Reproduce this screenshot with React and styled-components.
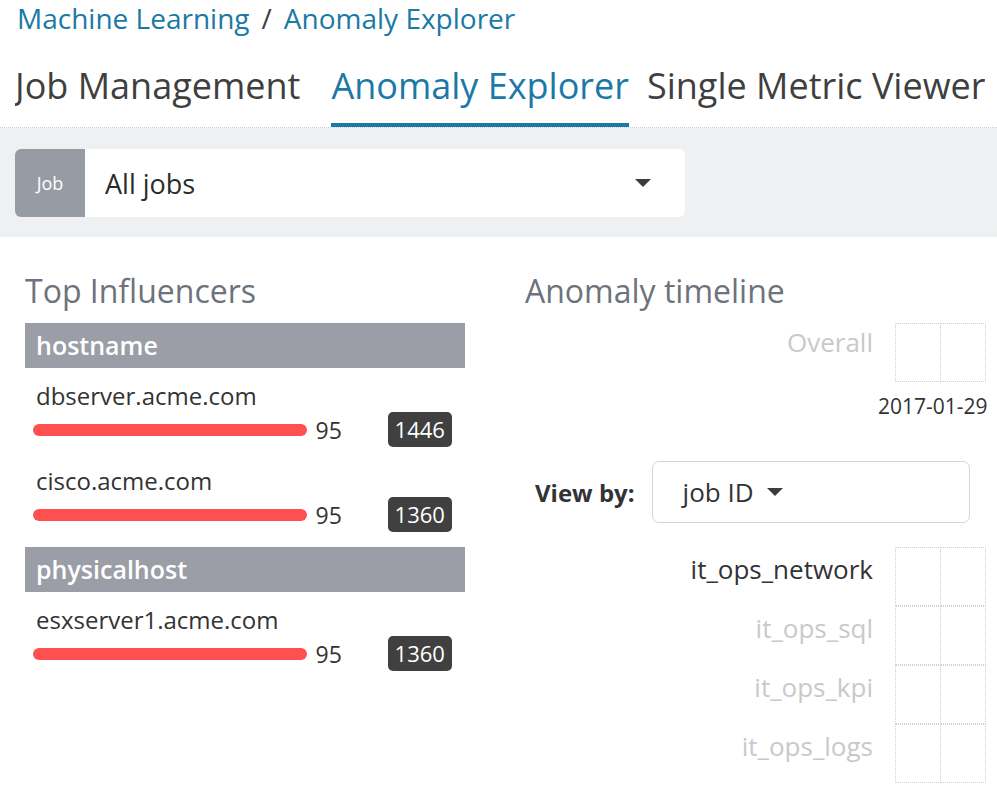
import React from "react";
import styled, { createGlobalStyle } from "styled-components";

const GlobalStyle = createGlobalStyle`
  html, body {
    margin: 0;
    padding: 0;
    background: #fff;
  }
  body {
    font-family: "Open Sans", "Noto Sans", sans-serif;
    color: #333;
  }
`;

const Page = styled.div`
  width: 997px;
  height: 790px;
  overflow: hidden;
  background: #fff;
`;

const Breadcrumbs = styled.div`
  height: 48px;
  padding: 2px 0 0 17px;
  box-sizing: border-box;
  font-size: 28px;
  line-height: 32px;
  color: #1a79a5;
  white-space: nowrap;
`;

const Sep = styled.span`
  color: #3f3f3f;
  margin: 0 12px;
`;

const Tabs = styled.div`
  display: flex;
  padding-left: 15px;
  border-bottom: 1px dotted #cfcfcf;
  white-space: nowrap;
`;

const TabClip = styled.div`
  display: flex;
  width: 970px;
  overflow: hidden;
`;

const Tab = styled.div`
  font-size: 36px;
  line-height: 44px;
  padding: 16px 0 15px;
  margin-right: ${({ gap }) => gap}px;
  color: ${({ active }) => (active ? "#1a79a5" : "#3f3f3f")};
  border-bottom: 4px solid ${({ active }) => (active ? "#1a79a5" : "transparent")};
  flex-shrink: 0;
`;

const FilterBand = styled.div`
  background: #eef0f2;
  padding: 21px 15px 20px;
`;

const Select = styled.div`
  display: flex;
  width: 670px;
  height: 68px;
  background: #fff;
  border-radius: 6px;
  overflow: hidden;
`;

const Prepend = styled.div`
  width: 70px;
  background: #979ba4;
  color: #fff;
  font-size: 18px;
  display: flex;
  align-items: center;
  justify-content: center;
`;

const SelectValue = styled.div`
  flex: 1;
  display: flex;
  align-items: center;
  justify-content: space-between;
  padding: 0 34px 0 20px;
  font-size: 27px;
  color: #2b2b2b;
`;

const Caret = styled.span`
  width: 0;
  height: 0;
  border-left: ${({ size }) => size}px solid transparent;
  border-right: ${({ size }) => size}px solid transparent;
  border-top: ${({ size }) => size}px solid #3c3c3c;
  display: inline-block;
`;

const Main = styled.div`
  display: flex;
  gap: 60px;
  padding: 34px 0 0 25px;
`;

const LeftCol = styled.div`
  width: 440px;
  flex-shrink: 0;
`;

const RightCol = styled.div`
  flex: 1;
  min-width: 0;
`;

const Heading = styled.div`
  font-size: 32px;
  line-height: 40px;
  color: #6d737c;
  margin-bottom: 12px;
  white-space: nowrap;
`;

const Group = styled.div`
  padding-bottom: 15px;
`;

const GroupHeader = styled.div`
  height: 45px;
  background: #9b9ea6;
  color: #fff;
  font-size: 25px;
  font-weight: 600;
  line-height: 45px;
  padding-left: 11px;
`;

const ItemList = styled.div`
  display: flex;
  flex-direction: column;
  gap: 6px;
`;

const Item = styled.div`
  padding-top: 15px;
`;

const ItemName = styled.div`
  font-size: 24px;
  line-height: 26px;
  padding-left: 11px;
  color: #333;
`;

const ScoreRow = styled.div`
  display: flex;
  align-items: center;
  height: 35px;
  margin-top: 3px;
  padding-left: 8px;
`;

const Bar = styled.div`
  width: 274px;
  height: 12px;
  border-radius: 6px;
  background: #fe5050;
`;

const Score = styled.div`
  width: 81px;
  padding-left: 9px;
  box-sizing: border-box;
  font-size: 23px;
  color: #333;
`;

const Badge = styled.div`
  height: 35px;
  padding: 0 7px;
  border-radius: 5px;
  background: #404040;
  color: #fff;
  font-size: 22px;
  line-height: 35px;
`;

const SwimRow = styled.div`
  display: grid;
  grid-template-columns: 348px auto;
  column-gap: 22px;
  align-items: start;
`;

const RowLabel = styled.div`
  font-size: 26px;
  line-height: ${({ compact }) => (compact ? 38 : 44)}px;
  text-align: right;
  white-space: nowrap;
  color: ${({ dim }) => (dim ? "#c9c9c9" : "#333")};
`;

const Cells = styled.div`
  display: flex;
`;

const Cell = styled.div`
  width: 44px;
  height: 57px;
  border: 1px dotted #cfcfcf;
  margin-left: -1px;
  &:first-child {
    margin-left: 0;
  }
`;

const DateLabel = styled.div`
  grid-column: 2;
  margin-left: -17px;
  margin-top: 10px;
  font-size: 21px;
  line-height: 28px;
  color: #333;
  white-space: nowrap;
`;

const ViewBy = styled.div`
  display: flex;
  align-items: center;
  gap: 17px;
  padding-left: 10px;
  margin: 41px 0 24px;
`;

const ViewByLabel = styled.div`
  font-size: 24px;
  font-weight: 700;
  color: #333;
`;

const ViewBySelect = styled.div`
  width: 318px;
  height: 62px;
  box-sizing: border-box;
  border: 1px solid #d4d4d4;
  border-radius: 7px;
  display: flex;
  align-items: center;
  gap: 13px;
  padding-left: 30px;
  font-size: 26px;
  color: #333;
`;

const SwimLanes = styled.div`
  display: flex;
  flex-direction: column;
`;

const influencers = [
  {
    field: "hostname",
    items: [
      { name: "dbserver.acme.com", score: 95, count: 1446 },
      { name: "cisco.acme.com", score: 95, count: 1360 },
    ],
  },
  {
    field: "physicalhost",
    items: [{ name: "esxserver1.acme.com", score: 95, count: 1360 }],
  },
];

const jobs = [
  { id: "it_ops_network", dim: false },
  { id: "it_ops_sql", dim: true },
  { id: "it_ops_kpi", dim: true },
  { id: "it_ops_logs", dim: true },
];

export default function App() {
  return (
    <Page>
      <GlobalStyle />
      <Breadcrumbs>
        Machine Learning<Sep>/</Sep>Anomaly Explorer
      </Breadcrumbs>
      <Tabs>
        <TabClip>
          <Tab gap={31}>Job Management</Tab>
          <Tab gap={18} active>
            Anomaly Explorer
          </Tab>
          <Tab gap={0}>Single Metric Viewer</Tab>
        </TabClip>
      </Tabs>

      <FilterBand>
        <Select>
          <Prepend>Job</Prepend>
          <SelectValue>
            All jobs
            <Caret size={8} />
          </SelectValue>
        </Select>
      </FilterBand>

      <Main>
        <LeftCol>
          <Heading>Top Influencers</Heading>
          {influencers.map((group) => (
            <Group key={group.field}>
              <GroupHeader>{group.field}</GroupHeader>
              <ItemList>
                {group.items.map((item) => (
                  <Item key={item.name}>
                    <ItemName>{item.name}</ItemName>
                    <ScoreRow>
                      <Bar style={{ width: `${(item.score / 100) * 288}px` }} />
                      <Score>{item.score}</Score>
                      <Badge>{item.count}</Badge>
                    </ScoreRow>
                  </Item>
                ))}
              </ItemList>
            </Group>
          ))}
        </LeftCol>

        <RightCol>
          <Heading>Anomaly timeline</Heading>
          <SwimRow>
            <RowLabel dim compact>
              Overall
            </RowLabel>
            <Cells>
              <Cell />
              <Cell />
            </Cells>
            <DateLabel>2017-01-29</DateLabel>
          </SwimRow>

          <ViewBy>
            <ViewByLabel>View by:</ViewByLabel>
            <ViewBySelect>
              job ID
              <Caret size={8} />
            </ViewBySelect>
          </ViewBy>

          <SwimLanes>
            {jobs.map((job) => (
              <SwimRow key={job.id}>
                <RowLabel dim={job.dim}>{job.id}</RowLabel>
                <Cells>
                  <Cell />
                  <Cell />
                </Cells>
              </SwimRow>
            ))}
          </SwimLanes>
        </RightCol>
      </Main>
    </Page>
  );
}
